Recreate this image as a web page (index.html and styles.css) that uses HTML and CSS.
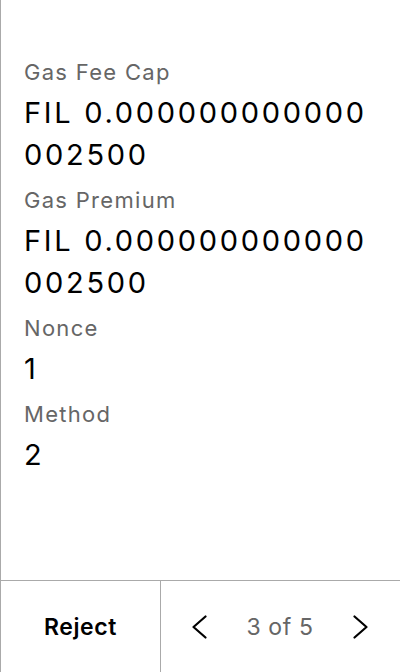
FILE: index.html
```html
<!DOCTYPE html>
<html>
<head>
<meta charset="utf-8">
<link rel="stylesheet" href="styles.css">
</head>
<body>
<div class="screen">
  <main class="details">
    <div class="field">
      <div class="label">Gas Fee Cap</div>
      <div class="value">FIL 0.000000000000<br>002500</div>
    </div>
    <div class="field">
      <div class="label">Gas Premium</div>
      <div class="value">FIL 0.000000000000<br>002500</div>
    </div>
    <div class="field">
      <div class="label">Nonce</div>
      <div class="value">1</div>
    </div>
    <div class="field">
      <div class="label">Method</div>
      <div class="value">2</div>
    </div>
  </main>
  <footer class="footer">
    <button class="reject">Reject</button>
    <div class="pager">
      <button class="nav" aria-label="Previous">
        <svg width="24" height="24" viewBox="0 0 24 24"><polyline points="17.5,1.5 5.5,12 17.5,22.5" fill="none" stroke="#000" stroke-width="2.2" stroke-linecap="round" stroke-linejoin="round"/></svg>
      </button>
      <span class="count">3 of 5</span>
      <button class="nav" aria-label="Next">
        <svg width="24" height="24" viewBox="0 0 24 24"><polyline points="6.5,1.5 18.5,12 6.5,22.5" fill="none" stroke="#000" stroke-width="2.2" stroke-linecap="round" stroke-linejoin="round"/></svg>
      </button>
    </div>
  </footer>
</div>
</body>
</html>
```
FILE: styles.css
```css
* { box-sizing: border-box; }
html, body {
  margin: 0;
  padding: 0;
  background: #fff;
}
body {
  font-family: Inter, "Noto Sans", sans-serif;
  color: #000;
}
.screen {
  width: 400px;
  height: 672px;
  border-left: 1px solid #aaa;
  display: flex;
  flex-direction: column;
}
.details {
  flex: 1;
  padding: 57px 23px 0 23px;
  display: flex;
  flex-direction: column;
  gap: 9px;
}
.label {
  font-size: 22px;
  line-height: 30px;
  letter-spacing: 1.3px;
  color: #666;
  margin-bottom: 5px;
}
.value {
  font-size: 29px;
  line-height: 42px;
  letter-spacing: 2.7px;
  color: #000;
}
.footer {
  height: 92px;
  border-top: 1px solid #aaa;
  display: grid;
  grid-template-columns: 160px 1fr;
}
.reject {
  border: none;
  border-right: 1px solid #aaa;
  background: none;
  font-family: inherit;
  font-size: 23px;
  font-weight: 600;
  letter-spacing: 0.6px;
  color: #000;
  padding: 0;
}
.pager {
  display: flex;
  align-items: center;
  justify-content: space-between;
  padding: 0 28px 0 27px;
}
.nav {
  border: none;
  background: none;
  padding: 0;
  width: 24px;
  height: 24px;
  display: flex;
}
.count {
  font-size: 23px;
  letter-spacing: 0.6px;
  color: #666;
}
```
